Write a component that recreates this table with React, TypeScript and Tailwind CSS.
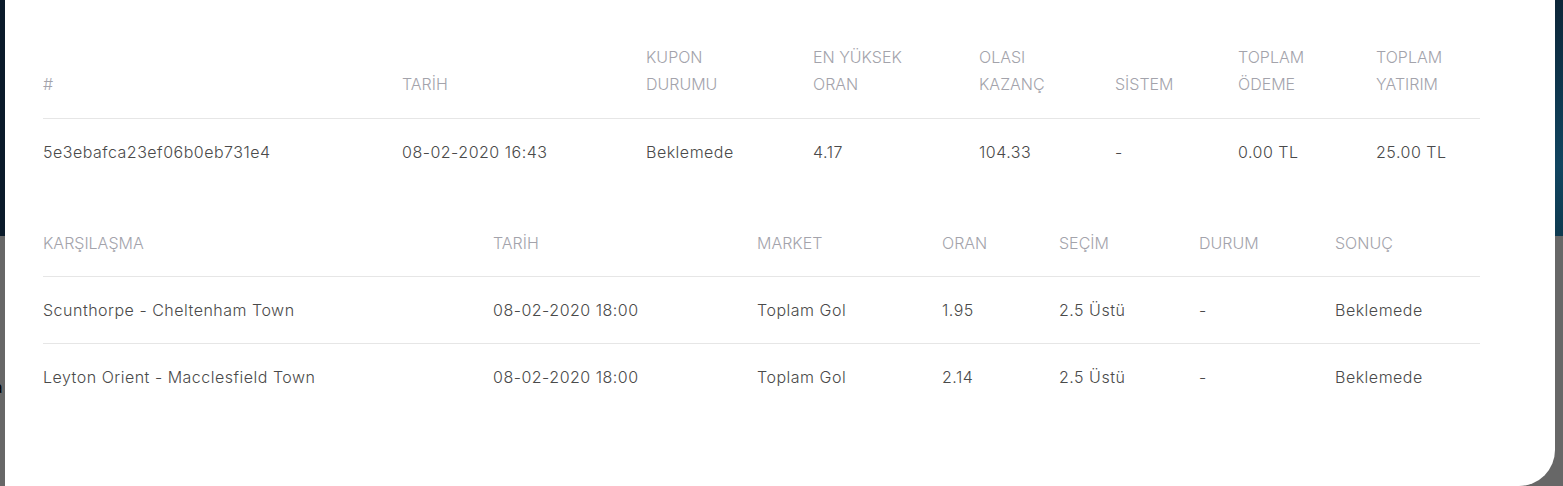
const couponCols = [
  { label: ["#"], value: "5e3ebafca23ef06b0eb731e4", w: "w-[359px]" },
  { label: ["TARİH"], value: "08-02-2020 16:43", w: "w-[244px]" },
  { label: ["KUPON", "DURUMU"], value: "Beklemede", w: "w-[167px]" },
  { label: ["EN YÜKSEK", "ORAN"], value: "4.17", w: "w-[166px]" },
  { label: ["OLASI", "KAZANÇ"], value: "104.33", w: "w-[136px]" },
  { label: ["SİSTEM"], value: "-", w: "w-[123px]" },
  { label: ["TOPLAM", "ÖDEME"], value: "0.00 TL", w: "w-[138px]" },
  { label: ["TOPLAM", "YATIRIM"], value: "25.00 TL", w: "w-[104px]" },
];

const matchHeaders = [
  { label: "KARŞILAŞMA", w: "w-[450px]" },
  { label: "TARİH", w: "w-[264px]" },
  { label: "MARKET", w: "w-[185px]" },
  { label: "ORAN", w: "w-[117px]" },
  { label: "SEÇİM", w: "w-[140px]" },
  { label: "DURUM", w: "w-[136px]" },
  { label: "SONUÇ", w: "w-[145px]" },
];

const matches = [
  ["Scunthorpe - Cheltenham Town", "08-02-2020 18:00", "Toplam Gol", "1.95", "2.5 Üstü", "-", "Beklemede"],
  ["Leyton Orient - Macclesfield Town", "08-02-2020 18:00", "Toplam Gol", "2.14", "2.5 Üstü", "-", "Beklemede"],
];

export default function App() {
  return (
    <div className="w-[1563px] h-[486px] overflow-hidden flex bg-[#676767] font-['Inter',sans-serif]">
      <div className="w-[5px] flex flex-col overflow-hidden">
        <div className="h-[236px] bg-[#0a1a2a]" />
        <div className="mt-[145px] -ml-[6px] text-[15px] leading-[14px] text-black">a</div>
      </div>

      <div className="w-[1550px] h-[486px] bg-white rounded-br-[36px] px-[38px] pt-[44px]">
        <div className="w-[1437px]">
          <div className="flex items-end border-b border-[#e6e6e6] pb-[20px]">
            {couponCols.map((c, i) => (
              <div key={i} className={`${c.w} text-[16px] leading-[27px] font-light text-[#a3a3ab]`}>
                {c.label.map((l) => (
                  <div key={l}>{l}</div>
                ))}
              </div>
            ))}
          </div>
          <div className="flex items-center h-[66px]">
            {couponCols.map((c, i) => (
              <div key={i} className={`${c.w} text-[16px] font-light tracking-[0.5px] text-[#4a4a4a]`}>
                {c.value}
              </div>
            ))}
          </div>

          <div className="mt-[24px] flex items-center h-[68px] border-b border-[#e6e6e6]">
            {matchHeaders.map((h) => (
              <div key={h.label} className={`${h.w} text-[16px] font-light text-[#a3a3ab]`}>
                {h.label}
              </div>
            ))}
          </div>
          {matches.map((row, r) => (
            <div
              key={r}
              className={`flex items-center ${r === 0 ? "h-[67px] border-b border-[#e6e6e6]" : "h-[66px]"}`}
            >
              {row.map((v, i) => (
                <div key={i} className={`${matchHeaders[i].w} text-[16px] font-light tracking-[0.5px] text-[#4a4a4a]`}>
                  {v}
                </div>
              ))}
            </div>
          ))}
        </div>
      </div>

      <div className="w-[8px] flex flex-col">
        <div className="h-[236px] bg-[linear-gradient(160deg,#0d2638_0%,#0f3a52_45%,#114560_70%,#0e3a50_100%)]" />
      </div>
    </div>
  );
}
